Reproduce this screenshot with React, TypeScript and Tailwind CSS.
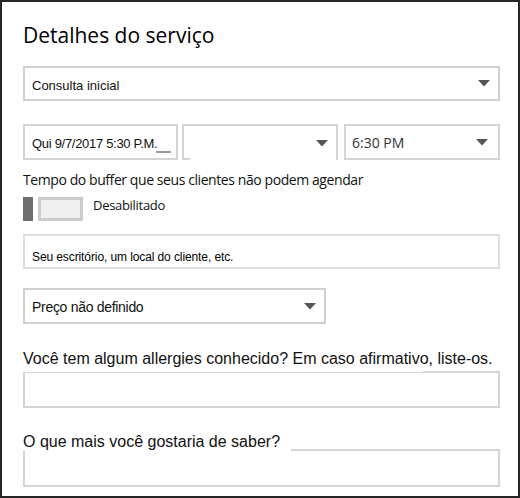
import React from "react";

const Arrow = () => (
  <svg width="12" height="7" viewBox="0 0 12 7" className="shrink-0">
    <path d="M0 0 L12 0 L6 6.5 Z" fill="#555555" />
  </svg>
);

export default function App() {
  const seg = { fontFamily: '"Open Sans", "Noto Sans", sans-serif' };
  const arial = { fontFamily: '"Liberation Sans", Arial, sans-serif' };
  return (
    <div className="w-[520px] h-[498px] border-2 border-[#262626] bg-white box-border pl-[21px] pr-[18px] flex flex-col text-black">
      <div className="mt-[18px] h-[30px] text-[21px] leading-[30px]" style={seg}>
        Detalhes do serviço
      </div>
      <div className="mt-[16px] h-[35px] border-2 border-[#cfcfcf] flex items-center justify-between pl-[7px] pr-[8px]">
        <span className="text-[13px] text-[#111] pt-[5px]" style={arial}>Consulta inicial</span>
        <Arrow />
      </div>
      <div className="mt-[23px] h-[36px] flex">
        <div className="relative w-[155px] h-[36px] border-2 border-[#d4d4d4] flex items-center pl-[7px]">
          <span className="text-[13px] text-[#111] tracking-[-0.3px] pt-[3px]" style={arial}>Qui 9/7/2017 5:30 P.M.</span>
          <span className="absolute left-[131px] top-[25px] w-[15px] h-[2px] bg-[#9a9a9a]" />
        </div>
        <div className="relative ml-[4px] w-[156px] h-[36px] border-t-2 border-l-2 border-r-2 border-[#d4d4d4] flex items-center justify-end pr-[8px]">
          <Arrow />
          <span className="absolute left-0 bottom-0 w-[6px] h-[2px] bg-[#d4d4d4]" />
        </div>
        <div className="ml-[6px] flex-1 h-[36px] border-2 border-[#d4d4d4] flex items-center justify-between pl-[6px] pr-[10px]">
          <span className="text-[14px] text-[#333]" style={seg}>6:30 PM</span>
          <Arrow />
        </div>
      </div>
      <div className="mt-[10px] h-[20px] text-[14px] leading-[20px] tracking-[-0.42px] text-[#111]" style={seg}>
        Tempo do buffer que seus clientes não podem agendar
      </div>
      <div className="mt-[7px] h-[24px] flex items-center">
        <div className="w-[10px] h-[24px] bg-[#6e6e6e]" />
        <div className="ml-[5px] w-[45px] h-[24px] border-[3px] border-[#cbcbcb] bg-[#efefef]" />
        <span className="ml-[10px] text-[13px] text-[#111] -mt-[6px] tracking-[-0.3px]" style={seg}>Desabilitado</span>
      </div>
      <div className="mt-[13px] h-[35px] border-2 border-[#dedede] flex items-center pl-[7px]">
        <span className="text-[12px] text-[#000] tracking-[-0.1px] pt-[10px]" style={arial}>Seu escritório, um local do cliente, etc.</span>
      </div>
      <div className="mt-[19px] w-[303px] h-[36px] border-2 border-[#d0d0d0] flex items-center justify-between pl-[7px] pr-[8px]">
        <span className="text-[14px] text-[#111] tracking-[-0.3px] pt-[2px]" style={arial}>Preço não definido</span>
        <Arrow />
      </div>
      <div className="relative z-10 mt-[25px] h-[23px] text-[16px] leading-[20px] text-[#111] whitespace-nowrap" style={arial}>
        <span className="absolute left-0 top-0 w-[400px] h-[23px] bg-white -z-10" />
        Você tem algum allergies conhecido? Em caso afirmativo, liste-os.
      </div>
      <div className="mt-[-1px] h-[37px] border-2 border-[#d4d4d4]" />
      <div className="relative z-10 mt-[26px] w-[268px] h-[17px] bg-white text-[16px] leading-[16px] text-[#111] whitespace-nowrap" style={arial}>
        O que mais você gostaria de saber?
      </div>
      <div className="mt-[-2px] h-[38px] border-2 border-[#d4d4d4]" />
    </div>
  );
}
